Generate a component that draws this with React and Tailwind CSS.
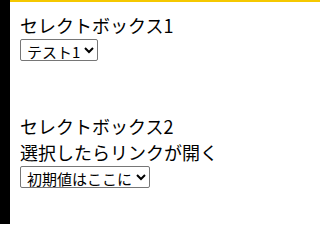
const App = () => {
    return (
        <div className="flex min-h-[224px] bg-white text-black" style={{ fontFamily: '"Noto Sans CJK JP", sans-serif' }}>
            <div className="w-[10px] shrink-0 bg-black"></div>
            <div className="flex-1">
                <div className="h-[2px] bg-[#f5c800]"></div>
                <div className="flex flex-col items-start px-[10px] pt-[10px] text-[18px] leading-[26px]">
                    <div>セレクトボックス1</div>
                    <select className="mt-[1px] h-[22px] rounded-[2px] border border-[#767676] bg-white pl-[2px] text-[15px] leading-[18px]" defaultValue="1">
                        <option value="1">テスト1</option>
                        <option value="2">テスト2</option>
                    </select>
                    <div className="h-[52px]"></div>
                    <div>セレクトボックス2</div>
                    <div>選択したらリンクが開く</div>
                    <select className="mt-[1px] h-[22px] rounded-[2px] border border-[#767676] bg-white pl-[2px] text-[15px] leading-[18px]" defaultValue="">
                        <option value="">初期値はここに</option>
                        <option value="a">リンク1</option>
                    </select>
                </div>
            </div>
        </div>
    );
};

export default App;
